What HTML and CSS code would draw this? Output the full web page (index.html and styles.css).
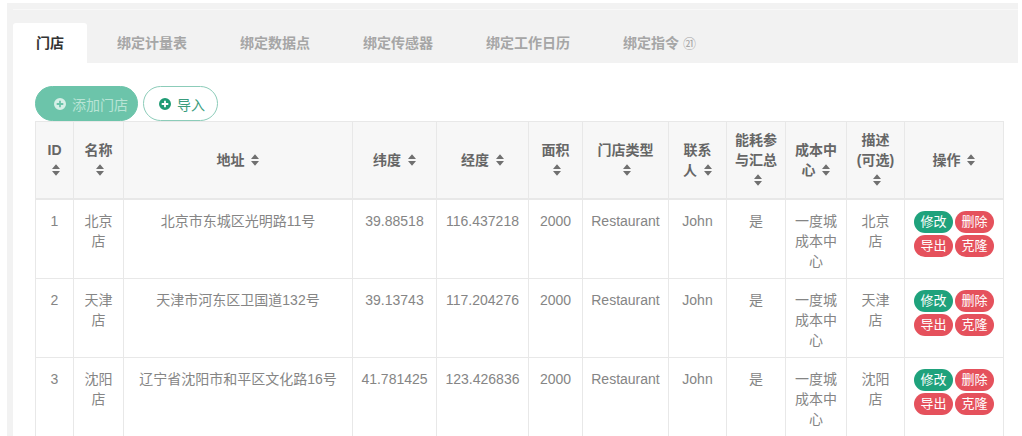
FILE: index.html
```html
<!DOCTYPE html>
<html lang="zh-CN">
<head>
    <meta charset="UTF-8">
    <title>门店</title>
    <link rel="stylesheet" href="styles.css">
</head>
<body>
    <svg class="defs" aria-hidden="true">
        <symbol id="i-sort" viewBox="0 0 8 12"><path d="M4 0.3 L8 5 H0 Z M0 7 H8 L4 11.7 Z"/></symbol>
        <symbol id="i-plus" viewBox="0 0 16 16"><path fill-rule="evenodd" d="M8 0a8 8 0 1 1 0 16A8 8 0 0 1 8 0zM6.8 3.6h2.4v3.2h3.2v2.4H9.2v3.2H6.8V9.2H3.6V6.8h3.2z"/></symbol>
    </svg>
    <div class="panel">
        <div class="tabs">
            <a class="tab active">门店</a>
            <a class="tab">绑定计量表</a>
            <a class="tab">绑定数据点</a>
            <a class="tab">绑定传感器</a>
            <a class="tab">绑定工作日历</a>
            <a class="tab">绑定指令 <span class="tab-mark">㉑</span></a>
        </div>
        <div class="content">
            <div class="toolbar">
                <button class="btn btn-add"><svg class="ico"><use href="#i-plus"/></svg>添加门店</button>
                <button class="btn btn-import"><svg class="ico"><use href="#i-plus"/></svg>导入</button>
            </div>
            <table class="grid">
                <colgroup>
                    <col style="width:38px"><col style="width:50px"><col style="width:229px"><col style="width:84px">
                    <col style="width:92px"><col style="width:54px"><col style="width:86px"><col style="width:58px">
                    <col style="width:59px"><col style="width:61px"><col style="width:58px"><col style="width:99px">
                </colgroup>
                <thead>
                    <tr>
                        <th>ID <svg class="sort"><use href="#i-sort"/></svg></th>
                        <th>名称 <svg class="sort"><use href="#i-sort"/></svg></th>
                        <th>地址 <svg class="sort"><use href="#i-sort"/></svg></th>
                        <th>纬度 <svg class="sort"><use href="#i-sort"/></svg></th>
                        <th>经度 <svg class="sort"><use href="#i-sort"/></svg></th>
                        <th>面积 <svg class="sort"><use href="#i-sort"/></svg></th>
                        <th>门店类型 <svg class="sort"><use href="#i-sort"/></svg></th>
                        <th>联系人 <svg class="sort"><use href="#i-sort"/></svg></th>
                        <th>能耗参与汇总 <svg class="sort"><use href="#i-sort"/></svg></th>
                        <th>成本中心 <svg class="sort"><use href="#i-sort"/></svg></th>
                        <th>描述(可选) <svg class="sort"><use href="#i-sort"/></svg></th>
                        <th>操作 <svg class="sort"><use href="#i-sort"/></svg></th>
                    </tr>
                </thead>
                <tbody>
                    <tr>
                        <td>1</td><td>北京店</td><td>北京市东城区光明路11号</td><td>39.88518</td><td>116.437218</td><td>2000</td>
                        <td>Restaurant</td><td>John</td><td>是</td><td>一度城成本中心</td><td>北京店</td>
                        <td><div class="ops"><span class="pill pill-edit">修改</span><span class="pill pill-del">删除</span><span class="pill pill-del">导出</span><span class="pill pill-del">克隆</span></div></td>
                    </tr>
                    <tr>
                        <td>2</td><td>天津店</td><td>天津市河东区卫国道132号</td><td>39.13743</td><td>117.204276</td><td>2000</td>
                        <td>Restaurant</td><td>John</td><td>是</td><td>一度城成本中心</td><td>天津店</td>
                        <td><div class="ops"><span class="pill pill-edit">修改</span><span class="pill pill-del">删除</span><span class="pill pill-del">导出</span><span class="pill pill-del">克隆</span></div></td>
                    </tr>
                    <tr>
                        <td>3</td><td>沈阳店</td><td>辽宁省沈阳市和平区文化路16号</td><td>41.781425</td><td>123.426836</td><td>2000</td>
                        <td>Restaurant</td><td>John</td><td>是</td><td>一度城成本中心</td><td>沈阳店</td>
                        <td><div class="ops"><span class="pill pill-edit">修改</span><span class="pill pill-del">删除</span><span class="pill pill-del">导出</span><span class="pill pill-del">克隆</span></div></td>
                    </tr>
                </tbody>
            </table>
        </div>
    </div>
</body>
</html>
```

FILE: styles.css
```css
body {
    margin: 0;
    background-color: #fff;
    font-family: "Liberation Sans", "Noto Sans CJK SC", sans-serif;
    font-size: 14px;
    color: #858585;
    overflow: hidden;
}
.defs {
    display: none;
}
.panel {
    margin: 3px 4px 0 7px;
    padding: 6px 0 0 6px;
    background-color: #f2f2f2;
}
.tabs {
    display: flex;
    padding-top: 13px;
    border-top: 1px solid #f8f8f8;
}
.tab {
    height: 40px;
    line-height: 40px;
    padding: 0 23px;
    margin-right: 7px;
    font-weight: bold;
    color: #a6a6a6;
    border-radius: 3px 3px 0 0;
}
.tab.active {
    background-color: #fff;
    color: #333;
}
.tab-mark {
    font-weight: normal;
    font-size: 13px;
}
.content {
    background-color: #fff;
    padding: 23px 15px 0 22px;
}
.toolbar {
    display: flex;
    gap: 5px;
}
.btn {
    display: flex;
    align-items: center;
    gap: 6px;
    height: 35px;
    border-radius: 18px;
    font-family: inherit;
    font-size: 14px;
    box-sizing: border-box;
}
.ico {
    width: 12px;
    height: 12px;
    fill: currentColor;
}
.btn-add {
    width: 103px;
    padding: 0 0 0 18px;
    background-color: #6cc4aa;
    border: 1px solid #6cc4aa;
    color: #b9e4d6;
}
.btn-add .ico {
    fill: #d6efe7;
}
.btn-import {
    width: 75px;
    padding: 0 0 0 15px;
    background-color: #fff;
    border: 1px solid #8cccb9;
    color: #3a9c7d;
}
.btn-import .ico {
    fill: #1f9b74;
}
.grid {
    table-layout: fixed;
    width: 968px;
    border-collapse: collapse;
    line-height: 20px;
    text-align: center;
}
.grid th,
.grid td {
    border: 1px solid #e8e8e8;
}
.grid th {
    padding: 8px;
    border-bottom-width: 2px;
    background-color: #f7f7f7;
    color: #666;
    font-weight: bold;
    vertical-align: middle;
}
.grid td {
    padding: 11px 8px 7px;
    vertical-align: top;
}
.sort {
    width: 8px;
    height: 12px;
    margin-left: 3px;
    fill: #707070;
    vertical-align: -1px;
}
.ops {
    display: grid;
    grid-template-columns: repeat(2, 39px);
    gap: 2px;
    justify-content: center;
}
.pill {
    height: 22px;
    line-height: 22px;
    border-radius: 11px;
    font-size: 13px;
    color: #fff;
}
.pill-edit {
    background-color: #1fa27c;
}
.pill-del {
    background-color: #e5515c;
}
```
